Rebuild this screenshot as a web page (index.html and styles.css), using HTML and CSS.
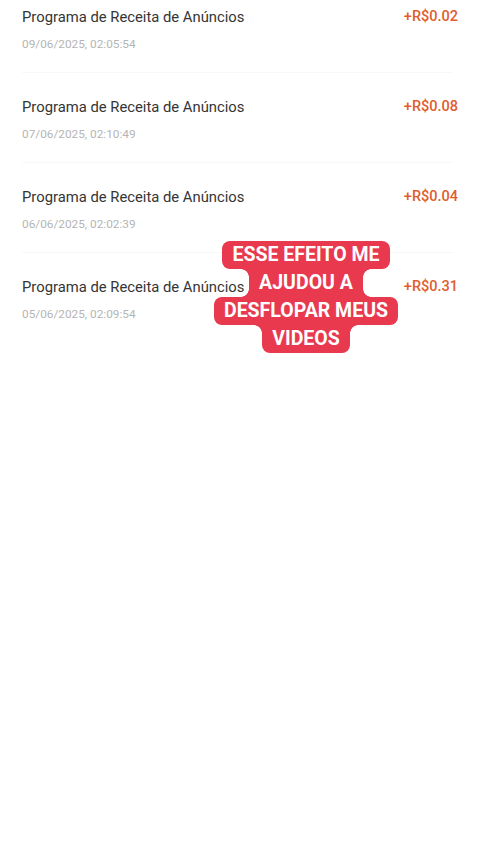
FILE: index.html
```html
<!DOCTYPE html>
<html lang="pt">
<head>
    <meta charset="UTF-8">
    <meta name="viewport" content="width=device-width, initial-scale=1.0">
    <title>Histórico de receita</title>
    <link rel="stylesheet" href="styles.css">
</head>
<body>
<div class="page">
    <ul class="list">
        <li class="item">
            <div class="info">
                <div class="title">Programa de Receita de Anúncios</div>
                <div class="date">09/06/2025, 02:05:54</div>
            </div>
            <div class="amount">+R$0.02</div>
        </li>
        <li class="item">
            <div class="info">
                <div class="title">Programa de Receita de Anúncios</div>
                <div class="date">07/06/2025, 02:10:49</div>
            </div>
            <div class="amount">+R$0.08</div>
        </li>
        <li class="item">
            <div class="info">
                <div class="title">Programa de Receita de Anúncios</div>
                <div class="date">06/06/2025, 02:02:39</div>
            </div>
            <div class="amount">+R$0.04</div>
        </li>
        <li class="item last">
            <div class="info">
                <div class="title">Programa de Receita de Anúncios</div>
                <div class="date">05/06/2025, 02:09:54</div>
            </div>
            <div class="amount">+R$0.31</div>
        </li>
    </ul>

    <div class="caption">
        <span class="line">ESSE EFEITO ME</span>
        <span class="line inner">AJUDOU A</span>
        <span class="line">DESFLOPAR MEUS</span>
        <span class="line inner bottom">VIDEOS</span>
    </div>
</div>
</body>
</html>
```

FILE: styles.css
```css
html {
    height: 100%;
}
body {
    margin: 0;
    height: 100%;
    background: #fff;
    font-family: Roboto, "Noto Sans", sans-serif;
    overflow: hidden;
}
.page {
    position: relative;
    display: flow-root;
    height: 100%;
}
.list {
    list-style: none;
    margin: -17px 0 0 0;
    padding: 0;
}
.item {
    display: flex;
    justify-content: space-between;
    align-items: flex-start;
    margin: 0 27px 0 22px;
    padding: 24px 0 20px 0;
    border-bottom: 1px solid #f8f8f8;
}
.item.last {
    border-bottom-color: transparent;
}
.title {
    font-size: 14.8px;
    line-height: 20px;
    color: #353535;
}
.date {
    margin-top: 9px;
    font-size: 11.8px;
    line-height: 16px;
    color: #b5b5b5;
}
.amount {
    font-size: 14.5px;
    line-height: 20px;
    font-weight: 500;
    color: #df5d2e;
    margin-right: -5px;
}

/* legenda por cima da lista */
.caption {
    position: absolute;
    top: 241px;
    left: 206px;
    width: 200px;
    display: flex;
    flex-direction: column;
    align-items: center;
}
.line {
    position: relative;
    display: block;
    padding: 0 10px;
    height: 28px;
    line-height: 28px;
    background: #e9394f;
    color: #fff;
    font-size: 19.5px;
    font-weight: 700;
    border-radius: 8px;
    white-space: nowrap;
}
.line.inner {
    border-radius: 0;
}
.line.inner.bottom {
    border-radius: 0 0 8px 8px;
}
.line.inner::before,
.line.inner::after {
    content: '';
    position: absolute;
    top: 0;
    bottom: 0;
    width: 8px;
}
.line.inner::before {
    right: 100%;
    background:
        radial-gradient(circle 8px at 0 100%, transparent 7.5px, #e9394f 8px) top / 8px 8px no-repeat,
        radial-gradient(circle 8px at 0 0, transparent 7.5px, #e9394f 8px) bottom / 8px 8px no-repeat;
}
.line.inner::after {
    left: 100%;
    background:
        radial-gradient(circle 8px at 100% 100%, transparent 7.5px, #e9394f 8px) top / 8px 8px no-repeat,
        radial-gradient(circle 8px at 100% 0, transparent 7.5px, #e9394f 8px) bottom / 8px 8px no-repeat;
}
.line.inner.bottom::before {
    background: radial-gradient(circle 8px at 0 100%, transparent 7.5px, #e9394f 8px) top / 8px 8px no-repeat;
}
.line.inner.bottom::after {
    background: radial-gradient(circle 8px at 100% 100%, transparent 7.5px, #e9394f 8px) top / 8px 8px no-repeat;
}
```
